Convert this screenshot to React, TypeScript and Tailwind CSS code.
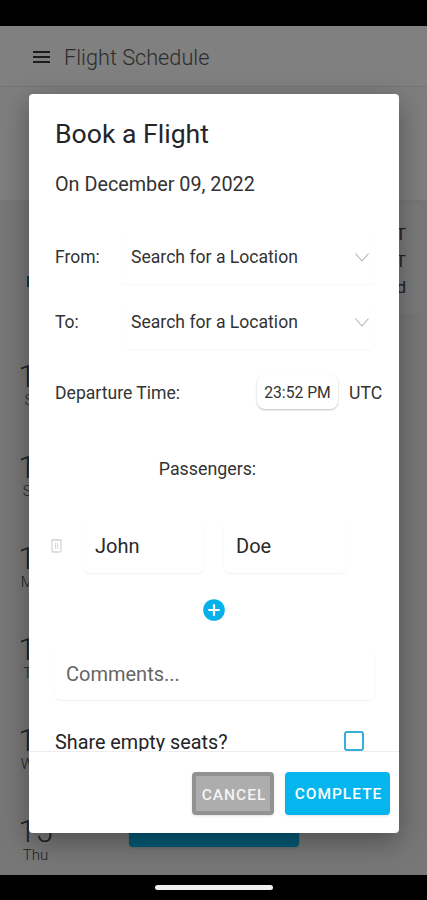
import { useState } from 'react'
import type { ReactNode } from 'react'

const days = [
  { num: '10', name: 'Sat' },
  { num: '11', name: 'Sun' },
  { num: '12', name: 'Mon' },
  { num: '13', name: 'Tue' },
  { num: '14', name: 'Wed' },
  { num: '15', name: 'Thu' },
]

function MenuIcon() {
  return (
    <svg width="17" height="12" viewBox="0 0 17 12" className="relative -top-px shrink-0">
      <path d="M0 1h17M0 6h17M0 11h17" stroke="#1c1c1c" strokeWidth="1.8" />
    </svg>
  )
}

function TrashIcon() {
  return (
    <svg width="11" height="14" viewBox="0 0 11 14" fill="none" stroke="#d6d6d6">
      <path d="M0 1h11" />
      <rect x="1" y="1" width="9" height="12" rx="1.5" strokeWidth="1.3" />
      <path d="M4.5 4v6M6.5 4v6" />
    </svg>
  )
}

function PlusIcon() {
  return (
    <svg width="22" height="22" viewBox="0 0 22 22">
      <circle cx="11" cy="11" r="10.8" fill="#05b1ea" />
      <path d="M11 5.3v11.4M5.3 11h11.4" stroke="#fff" strokeWidth="2.2" />
    </svg>
  )
}

function LocationRow({ label }: { label: string }) {
  return (
    <div className="flex h-[65px] items-center">
      <span className="w-[67px] text-[17.5px]">{label}</span>
      <button className="flex h-[53px] w-[253px] items-center justify-between rounded-md pl-[9px] pr-[6px] text-[17.6px] shadow-[0_1px_2px_rgba(0,0,0,0.04)]">
        <span>Search for a Location</span>
        <svg width="14" height="9" viewBox="0 0 14 9" fill="none">
          <path d="M0.5 0.5L7 8L13.5 0.5" stroke="#b5b5b5" strokeWidth="1.1" />
        </svg>
      </button>
    </div>
  )
}

function Schedule() {
  return (
    <div className="flex h-full flex-col bg-[#777777] text-[#1c2226]">
      <header className="flex h-[61px] shrink-0 items-center gap-[14px] border-b border-[#747474] bg-[#808080] pl-[33px] pt-[3px]">
        <MenuIcon />
        <h1 className="pt-[2px] text-[21.7px] font-light text-[#2c2c2c]">Flight Schedule</h1>
      </header>
      <div className="h-[113px] shrink-0 bg-[#7e7e7e]" />
      <div className="flex h-[151px] shrink-0 items-start justify-between pr-[7px]">
        <div className="mt-[76px] ml-[27px] h-[11px] w-[12px] bg-[#0b3a49]" />
        <div className="mt-[4px] flex h-[110px] w-[260px] flex-col items-end bg-[#7a7a7a] pr-[14px] pt-[17px] text-[17px] leading-[26.5px]">
          <span>T</span>
          <span>T</span>
          <span>d</span>
        </div>
      </div>
      <div className="flex flex-col pl-[19.5px]">
        {days.map(d => (
          <div key={d.num} className="flex h-[91px] shrink-0">
            <div className="flex w-[32px] flex-col items-center pt-[10px]">
              <span className="text-[31px] font-light leading-[31px]">{d.num}</span>
              <span className="text-[15px] font-light leading-[16px]">{d.name}</span>
            </div>
            {d.num === '15' && <div className="ml-[77.5px] h-[41px] w-[170px] rounded bg-[#055a78] shadow" />}
          </div>
        ))}
      </div>
    </div>
  )
}

function Field({ className, children }: { className: string; children: ReactNode }) {
  return <div className={`flex items-center rounded-md shadow-[0_1px_2px_rgba(0,0,0,0.06)] ${className}`}>{children}</div>
}

function BookingDialog() {
  const [share, setShare] = useState(false)

  return (
    <div className="flex h-[739px] w-[370px] flex-col overflow-hidden rounded bg-white font-[370] text-[#333] shadow-[0_8px_28px_rgba(0,0,0,0.35)]">
      <div className="h-[658px] shrink-0 overflow-hidden border-b border-[#ededed] pl-[26.5px]">
        <h2 className="mt-[24px] text-[26.6px] leading-[32px] text-[#242429]">Book a Flight</h2>
        <p className="mt-[23px] text-[19.8px] leading-[24px]">On December 09, 2022</p>
        <div className="mt-[28px]">
          <LocationRow label="From:" />
          <LocationRow label="To:" />
        </div>
        <div className="mt-[21px] flex h-[34px] items-center text-[17.6px]">
          <span className="w-[202px]">Departure Time:</span>
          <span className="relative -top-px flex h-[34px] w-[81px] items-center justify-center rounded-lg pt-[2px] text-[15.7px] shadow-[0_1px_2px_rgba(0,0,0,0.25)]">23:52 PM</span>
          <span className="ml-[11px]">UTC</span>
        </div>
        <p className="mt-[47px] w-[305px] text-center text-[17.8px] leading-[24px]">Passengers:</p>
        <div className="mt-[38px] flex h-[54px] items-center text-[20px] text-[#2a2a2a]">
          <span className="-ml-[4px] w-[32px]"><TrashIcon /></span>
          <Field className="h-[54px] w-[121px] pl-[12px]">John</Field>
          <Field className="ml-[20px] h-[54px] w-[122px] pl-[12px]">Doe</Field>
        </div>
        <div className="mt-[26px] flex w-[318px] justify-center"><PlusIcon /></div>
        <Field className="mt-[26px] h-[53px] w-[320px] pl-[11px] text-[20px] text-[#666]">Comments...</Field>
        <div className="mt-[31px] flex items-start text-[19.8px] leading-[24px] text-[#242424]">
          <span className="w-[289px]">Share empty seats?</span>
          <button aria-label="Share empty seats" onClick={() => setShare(!share)} className={`h-[20px] w-[20px] rounded-[3px] border-2 border-[#35aede] ${share ? 'bg-[#35aede]' : ''}`} />
        </div>
      </div>
      <div className="flex flex-1 items-start justify-end gap-[11px] pr-[8.5px] pt-[20px] text-[15.5px] font-medium tracking-[1px] text-white">
        <button className="h-[43px] w-[82px] rounded border-[4px] border-[#929292] bg-[#adadad] pt-[4px] pl-[2px] text-[#f4f4f4] shadow">CANCEL</button>
        <button className="h-[43px] w-[105px] rounded bg-[#05b5ee] pt-[3px] pl-[2px] shadow">COMPLETE</button>
      </div>
    </div>
  )
}

export default function App() {
  return (
    <div className="relative flex h-[900px] w-[427px] flex-col overflow-hidden bg-black font-['Roboto',sans-serif]">
      <div className="h-[26px] shrink-0" />
      <main className="h-[849px] shrink-0 overflow-hidden">
        <Schedule />
      </main>
      <footer className="flex flex-1 items-center justify-center">
        <div className="h-[5px] w-[118px] rounded-full bg-[#eee]" />
      </footer>
      <div className="absolute inset-x-0 top-[26px] flex h-[849px] justify-center overflow-hidden pt-[68px]">
        <BookingDialog />
      </div>
    </div>
  )
}
